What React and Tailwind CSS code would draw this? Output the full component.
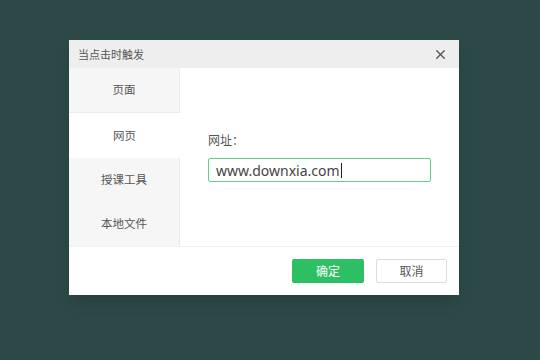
import { X } from 'lucide-react';

const tabs = ['页面', '网页'];

function App() {
  const active = 1;
  return (
    <div className="h-[360px] w-[540px] overflow-hidden bg-[#2c4947] pl-[69px] pt-[40px] font-['Noto_Sans_CJK_SC',sans-serif]">
      <div className="flex h-[255px] w-[390px] flex-col bg-white shadow-lg">
        <div className="flex h-[28px] items-center justify-between bg-[#eeeeee] pl-[9px] pr-[11px]">
          <span className="text-[11px] text-[#555]">当点击时触发</span>
          <X size={15} strokeWidth={2.2} className="text-[#555]" />
        </div>
        <div className="flex h-[178px]">
          <div className="flex w-[111px] flex-col">
            {tabs.map((t, i) => (
              <div
                key={t}
                className={
                  i === active
                    ? 'flex h-[45px] items-center justify-center bg-white text-[11.5px] text-[#555]'
                    : 'flex h-[45px] items-center justify-center border-r border-b border-[#ebebeb] bg-[#f6f6f6] text-[11.5px] text-[#555]'
                }
              >
                {t}
              </div>
            ))}
            <div className="flex flex-1 flex-col border-r border-[#ebebeb] bg-[#f6f6f6]">
              <div className="flex h-[44px] items-center justify-center text-[11.5px] text-[#555]">授课工具</div>
              <div className="flex h-[44px] items-center justify-center text-[11.5px] text-[#555]">本地文件</div>
            </div>
          </div>
          <div className="flex flex-1 flex-col pl-[28px] pt-[64px]">
            <span className="text-[12px] leading-[16px] text-[#555]">网址：</span>
            <div className="mt-[10px] flex h-[24px] w-[223px] items-center rounded-[2px] border-[1.5px] border-[#62cf88] px-[7px]">
              <span className="font-['Noto_Sans',sans-serif] text-[14px] text-[#444]">www.downxia.com</span>
              <span className="ml-[1px] h-[15px] w-[1px] bg-[#222]" />
            </div>
          </div>
        </div>
        <div className="flex flex-1 items-center justify-end gap-[12px] border-t border-[#f0f0f0] pr-[12px]">
          <button className="h-[24px] w-[72px] rounded-[2px] bg-[#2dbf63] text-[12px] text-white">确定</button>
          <button className="h-[24px] w-[71px] rounded-[2px] border border-[#dddddd] bg-white text-[12px] text-[#555]">取消</button>
        </div>
      </div>
    </div>
  );
}

export default App;
